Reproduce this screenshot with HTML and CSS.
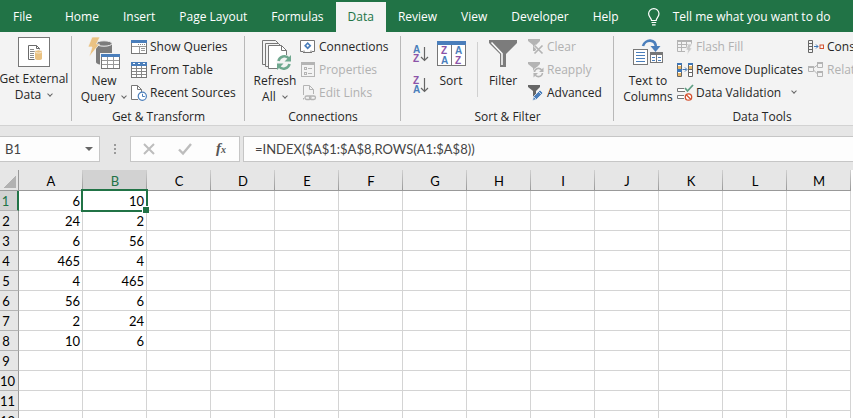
FILE: index.html
```
<!DOCTYPE html>
<html lang="en">
<head>
  <meta charset="utf-8">
  <title>Excel - INDEX and ROWS</title>
  <link rel="stylesheet" href="styles.css">
</head>
<body>
  <nav class="tabs">
    <a class="tab file" href="#file">File</a>
    <a class="tab" href="#home">Home</a>
    <a class="tab" href="#insert">Insert</a>
    <a class="tab" href="#layout">Page Layout</a>
    <a class="tab" href="#formulas">Formulas</a>
    <a class="tab active" href="#data">Data</a>
    <a class="tab" href="#review">Review</a>
    <a class="tab" href="#view">View</a>
    <a class="tab" href="#developer">Developer</a>
    <a class="tab" href="#help">Help</a>
    <button class="tell-me" type="button">
      <svg width="14" height="18" viewBox="0 0 14 18" fill="none" stroke="#fff" stroke-width="1.2">
        <path d="M4.5 12.5C4.5 10 1.6 9 1.6 5.8a5.2 5.2 0 0 1 10.4 0C12 9 9.200 10 9.200 12.500z"/>
        <path d="M4.500 14.500h4.700M5 16.800h3.600"/>
      </svg>
      <span>Tell me what you want to do</span>
    </button>
  </nav>

  <div class="ribbon">
    <section class="group external">
      <div class="group-body">
        <button class="big" type="button">
          <svg width="32" height="30" viewBox="0 0 32 30">
            <rect x=".5" y=".5" width="31" height="29" fill="#fff" stroke="#777"/>
            <path d="M16.500 22.500h-6v-14h8l3 3v1" fill="none" stroke="#6a6a6a"/>
            <path d="M18.500 8.500v3h3" fill="none" stroke="#6a6a6a"/>
            <path d="M12 12.500h4M12 14.500h5M12 16.500h4M12 18.500h4M12 20.500h4" stroke="#8a8a8a"/>
            <path d="M17 15v6.500c0 2 7 2 7 0V15z" fill="#eac282"/>
            <ellipse cx="20.500" cy="14.500" rx="3.500" ry="1.500" fill="#eac282" stroke="#fff" stroke-width=".6"/>
          </svg>
          <span>Get External</span>
          <span>Data <i class="chevron"></i></span>
        </button>
      </div>
    </section>

    <section class="group transform">
      <div class="group-body">
        <button class="big query" type="button">
          <svg width="32" height="32" viewBox="0 0 32 32">
            <path d="M8 7v18c0 4 16 4 16 0V7z" fill="#7c7c7c"/>
            <ellipse cx="16" cy="6.500" rx="8" ry="2.700" fill="#7c7c7c" stroke="#f2f2f2"/>
            <path d="M4 0h8L8.500 7h3L1 20l3-10H0z" fill="#eac282" stroke="#f3f3f3" stroke-width=".7"/>
            <rect x="12" y="16" width="21" height="17" fill="#f3f3f3"/>
            <rect x="13.500" y="17.500" width="18" height="14" fill="#fff" stroke="#777"/>
            <path d="M13 17h19v3H13z" fill="#4a7ebb"/>
            <path d="M14 23.500h17M14 27.500h17M19.500 20v11M25.500 20v11" stroke="#999"/>
          </svg>
          <span>New</span>
          <span>Query <i class="chevron"></i></span>
        </button>
        <div class="stack">
          <button class="small" type="button">
            <svg width="16" height="16" viewBox="0 0 16 16">
              <rect x=".5" y="1.500" width="15" height="13" fill="#fff" stroke="#777"/>
              <path d="M0 1h16v3H0z" fill="#4a7ebb"/>
              <path d="M7 5.500h7" stroke="#888" stroke-dasharray="1 1"/>
              <path d="M1 7.500h14M8.500 8v6M10 9.500h4M10 11.500h4" stroke="#999" fill="none"/>
            </svg>
            <span>Show Queries</span>
          </button>
          <button class="small" type="button">
            <svg width="16" height="16" viewBox="0 0 16 16">
              <rect x=".5" y=".5" width="15" height="15" fill="#fff" stroke="#777"/>
              <path d="M0 0h16v4H0z" fill="#4a7ebb"/>
              <path d="M2 1.500h2M7 1.500h2M12 1.500h2" stroke="#fff"/>
              <path d="M1 6.500h14M1 9.500h14M1 12.500h14M5.500 4v11M10.500 4v11" stroke="#888"/>
            </svg>
            <span>From Table</span>
          </button>
          <button class="small" type="button">
            <svg width="16" height="16" viewBox="0 0 16 16" fill="none">
              <path d="M7 14.500H.5V.5h6l4 4V7" fill="#fff" stroke="#777"/>
              <path d="M6.500.5v4h4" stroke="#777"/>
              <circle cx="11.300" cy="11.300" r="4.100" fill="#fff" stroke="#4a7ebb" stroke-width="1.200"/>
              <path d="M11.500 8.800v2.700h2.300" stroke="#4a7ebb"/>
            </svg>
            <span>Recent Sources</span>
          </button>
        </div>
      </div>
      <h2 class="group-label">Get &amp; Transform</h2>
    </section>

    <section class="group connections">
      <div class="group-body">
        <button class="big" type="button">
          <svg width="32" height="32" viewBox="0 0 32 32" fill="none">
            <path d="M6 27.500H3.500v-24h13l3 3" stroke="#777"/>
            <path d="M9 29.500H6.500v-23h13l3 3" stroke="#777"/>
            <path d="M9.500 31.500V8.500h13l5 5v18z" fill="#fff"/>
            <path d="M18 31.500H9.500V8.500h13l5 5V18M22.500 8.500v5h5" stroke="#777"/>
            <circle cx="25" cy="25.500" r="7.500" fill="#f3f3f3"/>
            <path d="M19.500 24a6 6 0 0 1 10.500-2.500M30.500 27A6 6 0 0 1 20 29.500" stroke="#6fa88f" stroke-width="2.600"/>
            <path d="M32 18v6.500h-6.500zM18 33v-6.500h6.500z" fill="#6fa88f"/>
          </svg>
          <span>Refresh</span>
          <span>All <i class="chevron"></i></span>
        </button>
        <div class="stack">
          <button class="small" type="button">
            <svg width="16" height="16" viewBox="0 0 16 16" fill="none">
              <path d="M3 12.500H.5V1.500h14v11H12" fill="#fff" stroke="#777"/>
              <path d="M3 13.500h9M4 11.500v2M11 11.500v2" stroke="#777"/>
              <rect x="5.900" y="4.900" width="3.600" height="3.600" transform="rotate(45 7.700 6.700)" stroke="#4a7ebb" stroke-width="1.600"/>
            </svg>
            <span>Connections</span>
          </button>
          <button class="small" type="button" disabled>
            <svg width="16" height="16" viewBox="0 0 16 16" fill="none">
              <rect x="1.500" y=".5" width="13" height="14" stroke="#b4b4b4"/>
              <path d="M1 0h14v3H1z" fill="#b4b4b4"/>
              <rect x="4.500" y="5.500" width="2" height="2" stroke="#b4b4b4"/>
              <rect x="4.500" y="10.500" width="2" height="2" stroke="#b4b4b4"/>
              <path d="M8 6.500h4M8 11.500h4" stroke="#b4b4b4"/>
            </svg>
            <span>Properties</span>
          </button>
          <button class="small" type="button" disabled>
            <svg width="16" height="16" viewBox="0 0 16 16" fill="none" stroke="#b4b4b4">
              <path d="M3.500 10V.5h6l4 4V9M3.500 14.500V13M9.500.5v4h4"/>
              <rect x="5" y="11" width="6" height="3.500" rx="1.700" stroke-width="1.300"/>
              <rect x="9.500" y="11" width="6" height="3.500" rx="1.700" stroke-width="1.300"/>
            </svg>
            <span>Edit Links</span>
          </button>
        </div>
      </div>
      <h2 class="group-label">Connections</h2>
    </section>

    <section class="group sorting">
      <div class="group-body">
        <div class="sort-pair">
          <button class="az" type="button" aria-label="Sort A to Z">
            <svg class="letters" width="16" height="18" viewBox="0 0 16 18">
              <text x="0" y="8" fill="#4a7ebb">A</text>
              <text x="0" y="17" fill="#8c54a8">Z</text>
              <path d="M11.500 2v13.500M8 12l3.500 3.500L15 12" fill="none" stroke="#666" stroke-width="1.200"/>
            </svg>
          </button>
          <button class="az" type="button" aria-label="Sort Z to A">
            <svg class="letters" width="16" height="18" viewBox="0 0 16 18">
              <text x="0" y="8" fill="#8c54a8">Z</text>
              <text x="0" y="17" fill="#4a7ebb">A</text>
              <path d="M11.500 2v13.500M8 12l3.500 3.500L15 12" fill="none" stroke="#666" stroke-width="1.200"/>
            </svg>
          </button>
        </div>
        <button class="big sort" type="button">
          <svg class="letters" width="28" height="32" viewBox="0 0 28 32">
            <rect x=".5" y="4.500" width="28" height="24" fill="#fff" stroke="#777"/>
            <path d="M0 4h29v4H0z" fill="#4a7ebb"/>
            <path d="M14.500 8v20" stroke="#777"/>
            <text x="4" y="17" fill="#8c54a8">Z</text>
            <text x="4" y="27" fill="#4a7ebb">A</text>
            <text x="18" y="17" fill="#4a7ebb">A</text>
            <text x="18" y="27" fill="#8c54a8">Z</text>
          </svg>
          <span>Sort</span>
        </button>
        <div class="divider"></div>
        <button class="big" type="button">
          <svg width="28" height="32" viewBox="0 0 28 32">
            <path d="M0 3h28v3L17 17v13h-6V17L0 6z" fill="#7c7c7c"/>
            <path d="M2.500 5.500L13 16.500V28" fill="none" stroke="#fff" stroke-width="1.500"/>
          </svg>
          <span>Filter</span>
        </button>
        <div class="stack">
          <button class="small" type="button" disabled>
            <svg width="16" height="16" viewBox="0 0 16 16" fill="none">
              <path d="M0 0h12v2L8 6v6H5V6L0 2z" fill="#b4b4b4"/>
              <path d="M6.500 6.500l8 8M14.500 6.500l-8 8" stroke="#f3f3f3" stroke-width="3"/>
              <path d="M6.500 6.500l8 8M14.500 6.500l-8 8" stroke="#b4b4b4" stroke-width="1.700"/>
            </svg>
            <span>Clear</span>
          </button>
          <button class="small" type="button" disabled>
            <svg width="16" height="16" viewBox="0 0 16 16" fill="none">
              <path d="M0 0h12v2L8 6v6H5V6L0 2z" fill="#b4b4b4"/>
              <circle cx="10.500" cy="10.500" r="5.500" fill="#f3f3f3"/>
              <path d="M6.500 10a4 4 0 0 1 7.500-1.500M14.500 11A4 4 0 0 1 7 12.500" stroke="#b4b4b4" stroke-width="1.500"/>
              <path d="M15.500 5.500V10H11zM5.500 15.500V11H10z" fill="#b4b4b4"/>
            </svg>
            <span>Reapply</span>
          </button>
          <button class="small" type="button">
            <svg width="16" height="16" viewBox="0 0 16 16">
              <path d="M0 0h12v2L8 6v6H5V6L0 2z" fill="#666"/>
              <path d="M4.500 15.500l1-4L12 5l3 3-6.500 6.500z" fill="#4a7ebb" stroke="#f3f3f3" stroke-width=".8"/>
              <path d="M10.500 6.500l3 3M5.500 11.500l3 3" stroke="#f3f3f3" stroke-width=".8"/>
            </svg>
            <span>Advanced</span>
          </button>
        </div>
      </div>
      <h2 class="group-label">Sort &amp; Filter</h2>
    </section>

    <section class="group tools">
      <div class="group-body">
        <button class="big columns" type="button">
          <svg width="32" height="32" viewBox="0 0 32 32" fill="none">
            <path d="M11 9c2-7 13-8 13 2" stroke="#4a7ebb" stroke-width="2.600"/>
            <path d="M18.500 9h10L23.500 15z" fill="#4a7ebb"/>
            <rect x="1.500" y="12.500" width="14" height="15" fill="#fff" stroke="#777"/>
            <path d="M4 15.500h9M4 18.500h9M4 21.500h9M4 24.500h9" stroke="#4a7ebb"/>
            <rect x="18.500" y="15.500" width="12" height="10" fill="#fff" stroke="#777"/>
            <path d="M18 15h13v3H18zM24 18h1v8h-1z" fill="#777"/>
            <path d="M20 20.500h3M20 23.500h3M26 20.500h3M26 23.500h3" stroke="#4a7ebb"/>
          </svg>
          <span>Text to</span>
          <span>Columns</span>
        </button>
        <div class="stack first">
          <button class="small" type="button" disabled>
            <svg width="16" height="16" viewBox="0 0 16 16" fill="none">
              <path d="M8 12.500H.5v-11h14V6M1 5.500h13M1 8.500h9M4.500 3v9M9.500 3v6" stroke="#b4b4b4"/>
              <path d="M0 1h15v2H0z" fill="#b4b4b4"/>
              <path d="M11 5h4l-2 4h2l-5 7 1-5H9z" fill="#c8c8c8" stroke="#f3f3f3" stroke-width=".6"/>
            </svg>
            <span>Flash Fill</span>
          </button>
          <button class="small" type="button">
            <svg width="16" height="16" viewBox="0 0 16 16" fill="none">
              <path d="M.5 1.500h4v13h-4zM11.500 1.500h4v13h-4z" fill="#fff" stroke="#666"/>
              <path d="M1 4h3v3H1zM1 11h3v3H1zM12 4h3v3h-3z" fill="#eab765"/>
              <path d="M0 1h5v2H0zM0 7h5v3H0zM11 1h5v2h-5z" fill="#3f76b5"/>
              <path d="M12 7.500h3M12 10.500h3" stroke="#666"/>
              <path d="M5.500 7.500h4M8 5.500l2 2-2 2" stroke="#3f76b5"/>
            </svg>
            <span>Remove Duplicates</span>
          </button>
          <button class="small" type="button">
            <svg width="16" height="16" viewBox="0 0 16 16" fill="none">
              <path d="M8 6.500H.5v-3H7M7 13.500H.5v-3H7" fill="#fff" stroke="#777"/>
              <path d="M8 3l2.500 3L16 0" stroke="#5f9f83" stroke-width="1.800"/>
              <circle cx="11.500" cy="12" r="3.200" fill="#fff" stroke="#d35230" stroke-width="1.300"/>
              <path d="M9.200 9.800l4.500 4.500" stroke="#d35230" stroke-width="1.300"/>
            </svg>
            <span>Data Validation</span>
            <i class="chevron"></i>
          </button>
        </div>
        <div class="stack">
          <button class="small" type="button">
            <svg width="16" height="16" viewBox="0 0 16 16" fill="none">
              <path d="M.5 1.500h4v12h-4zM0 4.500h5M0 7.500h5M0 10.500h5" stroke="#666"/>
              <path d="M6 7.500h4M8 5.500l2 2-2 2" stroke="#3f76b5"/>
              <rect x="12" y="6" width="3.500" height="3.500" stroke="#d35230"/>
            </svg>
            <span>Consolidate</span>
          </button>
          <button class="small" type="button" disabled>
            <svg width="16" height="16" viewBox="0 0 16 16" fill="none" stroke="#b4b4b4">
              <path d="M.5 4.500h5v5h-5zM9.500.5h5v5h-5zM9.500 9.500h5v5h-5zM5.500 6L9.500 3M5.500 8l4 4"/>
              <path d="M0 5h6M9 1h6M9 10h6" stroke-width="2"/>
            </svg>
            <span>Relationships</span>
          </button>
        </div>
      </div>
      <h2 class="group-label">Data Tools</h2>
    </section>
  </div>

  <div class="formula-bar">
    <div class="name-box">
      <input type="text" value="B1" aria-label="Name box">
      <button type="button" aria-label="Choose name"><i class="arrow"></i></button>
    </div>
    <div class="grip"></div>
    <div class="formula-actions">
      <button type="button" aria-label="Cancel">
        <svg width="12" height="12" viewBox="0 0 12 12"><path d="M1 1l10 10M11 1L1 11" stroke="#bdbdbd" stroke-width="2"/></svg>
      </button>
      <button type="button" aria-label="Enter">
        <svg width="14" height="12" viewBox="0 0 14 12"><path d="M1 6.500l4 4L13 1" fill="none" stroke="#bdbdbd" stroke-width="2.400"/></svg>
      </button>
      <button class="fx" type="button" aria-label="Insert function">f<small>x</small></button>
    </div>
    <input class="formula" type="text" value="=INDEX($A$1:$A$8,ROWS(A1:$A$8))" aria-label="Formula">
  </div>

  <main class="sheet">
    <table>
      <colgroup>
        <col class="numbers">
        <col span="13">
      </colgroup>
      <thead>
        <tr>
          <td class="corner"></td>
          <th scope="col">A</th><th scope="col" class="selected">B</th><th scope="col">C</th><th scope="col">D</th>
          <th scope="col">E</th><th scope="col">F</th><th scope="col">G</th><th scope="col">H</th><th scope="col">I</th>
          <th scope="col">J</th><th scope="col">K</th><th scope="col">L</th><th scope="col">M</th>
        </tr>
      </thead>
      <tbody>
        <tr><th scope="row" class="selected">1</th><td>6</td><td class="active-cell">10</td><td></td><td></td><td></td><td></td><td></td><td></td><td></td><td></td><td></td><td></td><td></td></tr>
        <tr><th scope="row">2</th><td>24</td><td>2</td><td></td><td></td><td></td><td></td><td></td><td></td><td></td><td></td><td></td><td></td><td></td></tr>
        <tr><th scope="row">3</th><td>6</td><td>56</td><td></td><td></td><td></td><td></td><td></td><td></td><td></td><td></td><td></td><td></td><td></td></tr>
        <tr><th scope="row">4</th><td>465</td><td>4</td><td></td><td></td><td></td><td></td><td></td><td></td><td></td><td></td><td></td><td></td><td></td></tr>
        <tr><th scope="row">5</th><td>4</td><td>465</td><td></td><td></td><td></td><td></td><td></td><td></td><td></td><td></td><td></td><td></td><td></td></tr>
        <tr><th scope="row">6</th><td>56</td><td>6</td><td></td><td></td><td></td><td></td><td></td><td></td><td></td><td></td><td></td><td></td><td></td></tr>
        <tr><th scope="row">7</th><td>2</td><td>24</td><td></td><td></td><td></td><td></td><td></td><td></td><td></td><td></td><td></td><td></td><td></td></tr>
        <tr><th scope="row">8</th><td>10</td><td>6</td><td></td><td></td><td></td><td></td><td></td><td></td><td></td><td></td><td></td><td></td><td></td></tr>
        <tr><th scope="row">9</th><td></td><td></td><td></td><td></td><td></td><td></td><td></td><td></td><td></td><td></td><td></td><td></td><td></td></tr>
        <tr><th scope="row">10</th><td></td><td></td><td></td><td></td><td></td><td></td><td></td><td></td><td></td><td></td><td></td><td></td><td></td></tr>
        <tr><th scope="row">11</th><td></td><td></td><td></td><td></td><td></td><td></td><td></td><td></td><td></td><td></td><td></td><td></td><td></td></tr>
        <tr><th scope="row">12</th><td></td><td></td><td></td><td></td><td></td><td></td><td></td><td></td><td></td><td></td><td></td><td></td><td></td></tr>
      </tbody>
    </table>
  </main>
</body>
</html>
```
FILE: styles.css
```
* {
  box-sizing: border-box;
}

html, body {
  margin: 0;
  padding: 0;
}

body {
  display: flex;
  flex-direction: column;
  height: 100vh;
  overflow: hidden;
  background: #e6e6e6;
  color: #262626;
  font-family: "Open Sans", "Noto Sans", sans-serif;
  font-size: 12px;
  line-height: 16px;
}

button, input {
  margin: 0;
  padding: 0;
  border: 0;
  background: none;
  color: inherit;
  font: inherit;
}

svg {
  display: block;
  flex: none;
  overflow: visible;
}

/* tabs */

.tabs {
  display: flex;
  flex: none;
  height: 32px;
  padding-top: 2px;
  background: #217346;
  white-space: nowrap;
}

.tab {
  padding: 7px 12px;
  color: #fff;
  text-decoration: none;
}

.tab.file {
  padding: 7px 21px 7px 13px;
}

.tab.active {
  background: #f3f3f3;
  color: #217346;
}

.tell-me {
  display: flex;
  align-items: center;
  gap: 12px;
  padding: 0 16px;
  color: #fff;
}

/* ribbon */

.ribbon {
  display: grid;
  flex: none;
  grid-template-columns: 72px 173px 156px 213px minmax(296px, 1fr);
  padding: 3px 0 0;
  overflow: hidden;
  background: #f3f3f3;
  border-bottom: 1px solid #d2d2d2;
  white-space: nowrap;
}

.group {
  position: relative;
}

.group::after {
  content: "";
  position: absolute;
  top: 1px;
  right: 0;
  bottom: 4px;
  width: 1px;
  background: #b8b8b8;
}

.group-body {
  display: flex;
  height: 70px;
  padding-left: 6px;
}

.external .group-body {
  padding-left: 0;
}

.group-label {
  margin: 4px 0 0;
  font-size: 12px;
  font-weight: normal;
  text-align: center;
}

.big {
  display: flex;
  flex: none;
  flex-direction: column;
  align-items: center;
  width: 48px;
  padding-top: 2px;
}

.big svg {
  margin-bottom: 4px;
}

.external .big {
  width: 68px;
}

.big.query {
  width: 52px;
}

.big.columns {
  width: 56px;
}

.big.sort {
  width: 32px;
}

.stack {
  display: flex;
  flex-direction: column;
}

.stack.first {
  width: 131px;
}

.small {
  display: flex;
  align-items: center;
  gap: 3px;
  height: 23px;
  padding-left: 1px;
}

.small:disabled {
  color: #b1b1b1;
}

.small .chevron {
  margin-left: 8px;
}

.chevron {
  display: inline-block;
  width: 4px;
  height: 4px;
  margin: 0 1px 3px 4px;
  border: solid #666;
  border-width: 0 1px 1px 0;
  transform: rotate(45deg);
}

.sort-pair {
  display: flex;
  flex: none;
  flex-direction: column;
  gap: 13px;
  width: 28px;
  padding-top: 10px;
}

.az {
  display: flex;
  justify-content: center;
}

.letters text {
  font-family: "Liberation Sans", sans-serif;
  font-size: 10px;
  font-weight: bold;
}

.divider {
  width: 1px;
  height: 55px;
  margin: 7px 1px 0 10px;
  background: #d0d0d0;
}

/* formula bar */

.formula-bar {
  display: flex;
  flex: none;
  padding: 10px 0 8px;
  color: #444;
  font-family: "Lato", "Open Sans", sans-serif;
  font-size: 13px;
}

.name-box, .formula-actions, .formula {
  height: 26px;
  background: #fdfdfd;
  border: 1px solid #c6c6c6;
}

.name-box {
  display: flex;
  width: 100px;
  border-left: 0;
}

.name-box input {
  flex: 1;
  min-width: 0;
  padding-left: 5px;
}

.name-box button {
  width: 20px;
}

.arrow {
  display: block;
  width: 8px;
  margin: auto;
  border: 4px solid transparent;
  border-top-color: #666;
  border-bottom: 0;
}

.grip {
  width: 30px;
  height: 12px;
  margin: auto 0;
  background: radial-gradient(circle, #9a9a9a 1px, transparent 1px) center top / 4px 4px repeat-y;
}

.formula-actions {
  display: grid;
  grid-template-columns: repeat(3, 1fr);
  width: 110px;
  margin-right: 3px;
}

.formula-actions svg {
  margin: auto;
}

.fx {
  color: #555;
  font-family: "Liberation Serif", serif;
  font-size: 15px;
  font-style: italic;
  font-weight: bold;
}

.fx small {
  font-size: 10px;
}

.formula {
  flex: 1;
  min-width: 0;
  padding-left: 11px;
  border-right: 0;
}

/* sheet */

.sheet {
  flex: 1;
  min-height: 0;
  overflow: hidden;
  background: #fff;
}

table {
  width: 851px;
  border-collapse: separate;
  border-spacing: 0;
  table-layout: fixed;
  color: #000;
  font-family: "Lato", "Open Sans", sans-serif;
  font-size: 13px;
}

col {
  width: 64px;
}

.numbers {
  width: 19px;
}

th, td {
  height: 20px;
  padding: 0 2px;
  border: solid #d4d4d4;
  border-width: 0 1px 1px 0;
  font-weight: normal;
  text-align: right;
}

thead th {
  height: 21px;
  padding: 1px 0 0;
  background: linear-gradient(#d0d0d0, #999) right / 1px 100% no-repeat #e6e6e6;
  border-right: 0;
  border-bottom-color: #999;
  text-align: center;
}

tbody th {
  padding: 0 6px 0 0;
  background: #e6e6e6;
  border-color: #999;
  border-bottom-color: #b4b4b4;
  text-align: center;
}

th.selected {
  background-color: #d2d2d2;
  color: #217346;
}

thead th.selected {
  border-bottom-color: #217346;
}

tbody th.selected {
  border-right: 2px solid #217346;
}

.corner {
  background: linear-gradient(135deg, transparent 50%, #b2b2b2 50%) 3px 5px / 13px 13px no-repeat #e6e6e6;
  border-color: #999;
}

.active-cell {
  position: relative;
}

.active-cell::before {
  content: "";
  position: absolute;
  inset: -2px;
  border: 2px solid #217346;
}

.active-cell::after {
  content: "";
  position: absolute;
  right: -3px;
  bottom: -3px;
  width: 6px;
  height: 6px;
  background: #217346;
  border: solid #fff;
  border-width: 1px 0 0 1px;
}
```
